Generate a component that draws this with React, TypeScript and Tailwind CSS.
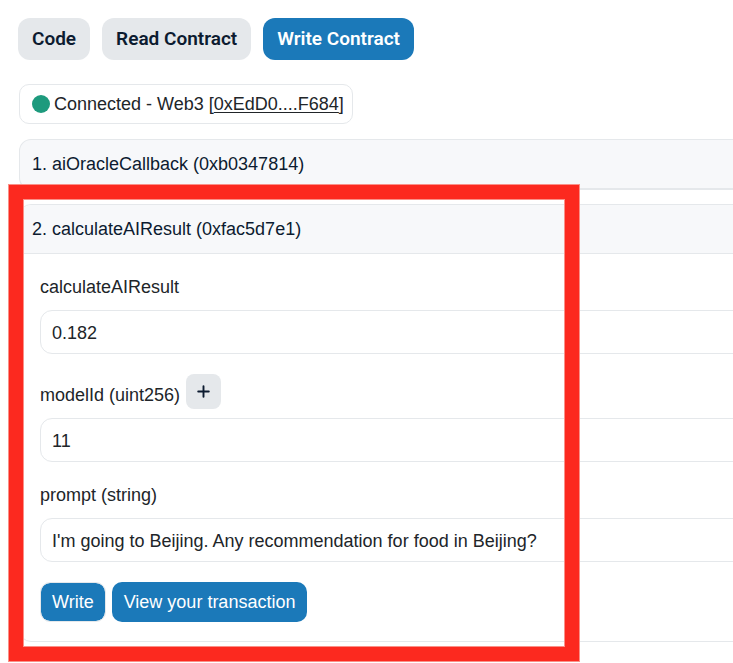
import { useState } from "react";
import type { ReactNode } from "react";

const tabs = ["Code", "Read Contract", "Write Contract"];

function Tab({ label, active, onSelect }: { label: string; active: boolean; onSelect: () => void }) {
  const tone = active ? "bg-[#1b79b9] text-white" : "bg-[#e5e8eb] text-[#0c1b30]";
  return (
    <button
      type="button"
      aria-pressed={active}
      onClick={onSelect}
      className={`h-[42px] rounded-xl px-3.5 font-[Roboto,sans-serif] text-[19px] font-semibold whitespace-nowrap ${tone}`}
    >
      {label}
    </button>
  );
}

function Field({ id, label, value, action }: { id: string; label: string; value: string; action?: ReactNode }) {
  return (
    <div>
      <div className={action ? "flex h-11 items-start gap-1.5" : "flex h-9 items-start"}>
        <label htmlFor={id} className={action ? "pt-2 leading-[26px]" : "leading-[26px]"}>
          {label}
        </label>
        {action}
      </div>
      <input
        id={id}
        type="text"
        defaultValue={value}
        className="block h-11 w-full rounded-xl border border-[#e5e8eb] bg-white px-[11px] pt-0.5 outline-none"
      />
    </div>
  );
}

export default function App() {
  const [active, setActive] = useState("Write Contract");

  return (
    <main className="min-h-screen overflow-hidden bg-white pt-[18px] pb-5 pl-[18px] font-['Liberation_Sans',Arial,sans-serif] text-lg text-[#212529]">
      <nav className="flex gap-3">
        {tabs.map((tab) => (
          <Tab key={tab} label={tab} active={tab === active} onSelect={() => setActive(tab)} />
        ))}
      </nav>

      <div className="-mr-12 pl-px">
        <div className="mt-6 flex h-10 w-fit items-center gap-1 rounded-[10px] border border-[#e5e8eb] pr-2 pl-3">
          <span className="size-[18px] rounded-full bg-[#1d9a7d]" />
          <p className="whitespace-nowrap">
            Connected - Web3 [
            <a href="#account" className="underline decoration-1 underline-offset-2">
              0xEdD0....F684
            </a>
            ]
          </p>
        </div>

        <section className="mt-[15px] rounded-xl border border-b-2 border-[#e5e8eb] bg-[#f7f8fa]">
          <h2 className="flex h-12 items-center px-3 text-[#0c1b30]">1. aiOracleCallback (0xb0347814)</h2>
        </section>

        <section className="relative mt-3.5 rounded-xl border border-[#e5e8eb]">
          <h2 className="flex h-[49px] items-center rounded-t-xl border-b border-[#e5e8eb] bg-[#f7f8fa] px-3 text-[#0c1b30]">
            2. calculateAIResult (0xfac5d7e1)
          </h2>
          <form className="px-5 pt-5 pb-[19px]" onSubmit={(event) => event.preventDefault()}>
            <div className="flex flex-col gap-5">
              <Field id="payable" label="calculateAIResult" value="0.182" />
              <Field
                id="model-id"
                label="modelId (uint256)"
                value="11"
                action={
                  <button
                    type="button"
                    aria-label="Add zeros"
                    className="flex size-[35px] items-center justify-center rounded-lg bg-[#e5e8eb] text-[#0c1b30]"
                  >
                    <svg viewBox="0 0 14 14" className="size-3.5" fill="none" stroke="currentColor" strokeWidth="1.9" strokeLinecap="round">
                      <path d="M6.5 1.2v10.6M1.2 6.5h10.6" />
                    </svg>
                  </button>
                }
              />
              <Field
                id="prompt"
                label="prompt (string)"
                value="I'm going to Beijing. Any recommendation for food in Beijing?"
              />
            </div>
            <div className="mt-5 flex items-center gap-1.5 text-white">
              <button type="submit" className="h-10 rounded-[10px] border border-[#e5e8eb] bg-[#1b79b9] bg-clip-padding px-[11px]">
                Write
              </button>
              <button type="button" className="h-10 rounded-[10px] bg-[#1b79b9] px-3 whitespace-nowrap">
                View your transaction
              </button>
            </div>
          </form>
          <div
            aria-hidden="true"
            className="pointer-events-none absolute -inset-y-5 -left-[11px] w-[570px] border-[14px] border-[#fc291f] shadow-[0_0_0_1px_#fa9088,inset_0_0_0_1px_#fa9088]"
          />
        </section>
      </div>
    </main>
  );
}
